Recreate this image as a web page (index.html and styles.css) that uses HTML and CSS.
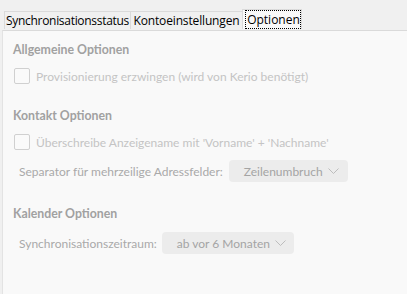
FILE: index.html
```html
<!DOCTYPE html>
<html>
<head>
<meta charset="utf-8">
<link rel="stylesheet" href="styles.css">
</head>
<body>
<div class="tabs">
  <div class="tab t1">Synchronisationsstatus</div>
  <div class="tab t2">Kontoeinstellungen</div>
  <div class="tab t3 active"><span class="focus">Optionen</span></div>
</div>
<div class="panel">
  <section class="group">
    <h2>Allgemeine Optionen</h2>
    <label class="check"><span class="box"></span>Provisionierung erzwingen (wird von Kerio benötigt)</label>
  </section>
  <section class="group">
    <h2>Kontakt Optionen</h2>
    <label class="check"><span class="box"></span>Überschreibe Anzeigename mit 'Vorname' + 'Nachname'</label>
    <div class="field">
      <span class="flabel">Separator für mehrzeilige Adressfelder:</span>
      <span class="select sep">Zeilenumbruch<svg class="chev" width="11" height="6" viewBox="0 0 11 6"><path d="M0.5 0.5 L5.5 5.5 L10.5 0.5" fill="none" stroke="#bdbdbd" stroke-width="1"/></svg></span>
    </div>
  </section>
  <section class="group">
    <h2>Kalender Optionen</h2>
    <div class="field">
      <span class="flabel">Synchronisationszeitraum:</span>
      <span class="select range">ab vor 6 Monaten<svg class="chev" width="11" height="6" viewBox="0 0 11 6"><path d="M0.5 0.5 L5.5 5.5 L10.5 0.5" fill="none" stroke="#bdbdbd" stroke-width="1"/></svg></span>
    </div>
  </section>
</div>
</body>
</html>
```
FILE: styles.css
```css
html, body {
  margin: 0;
  padding: 0;
  height: 100%;
}
body {
  background: #f0f0f0;
  font-family: "Open Sans", "Noto Sans", sans-serif;
  display: flex;
  flex-direction: column;
}
.tabs {
  display: flex;
  align-items: flex-end;
  padding: 0 0 1px 4px;
  height: 29px;
}
.tab {
  font-size: 12px;
  color: #000;
  height: 18px;
  line-height: 18px;
  border: 1px solid #dadada;
  border-bottom: none;
  margin-right: -1px;
  background: #f0f0f0;
  white-space: nowrap;
  box-sizing: border-box;
  text-align: center;
  overflow: hidden;
}
.t1 {
  width: 127px;
  letter-spacing: -0.3px;
}
.t2 {
  width: 113px;
  letter-spacing: -0.15px;
}
.t3 {
  width: 60px;
}
.tab.active {
  background: #f9f9f9;
  height: 20px;
  display: flex;
  padding: 0 0 0 2px;
}
.focus {
  flex: 1;
  display: block;
  outline: 1px dotted #000;
  outline-offset: -1px;
  line-height: 19px;
  padding-left: 1px;
}
.panel {
  flex: 1;
  margin-left: 2px;
  background: #f9f9f9;
  border-top: 1px solid #dadada;
  border-left: 1px solid #e3e3e3;
  padding: 11px 0 0 10px;
  font-family: "Lato", "Open Sans", sans-serif;
}
.group + .group {
  margin-top: 24px;
}
h2 {
  margin: 0 0 10px 0;
  font-size: 12.3px;
  font-weight: bold;
  color: #a1a1a1;
  line-height: 16px;
  height: 16px;
}
.check {
  display: flex;
  align-items: center;
  gap: 6px;
  font-size: 12px;
  color: #c4c4c4;
  padding-left: 1px;
  height: 16px;
}
.box {
  width: 14px;
  height: 14px;
  border: 1px solid #d0d0d0;
  border-radius: 2px;
  background: #fafafa;
  flex: none;
}
.field {
  display: flex;
  align-items: center;
  padding-left: 6px;
  margin-top: 10px;
}
.flabel {
  font-size: 12px;
  color: #a9a9a9;
}
.select {
  display: inline-flex;
  align-items: center;
  background: #ececec;
  border-radius: 4px;
  height: 22px;
  font-size: 12px;
  color: #a4a4a4;
  box-sizing: border-box;
  padding-left: 15px;
}
.select.sep {
  width: 119px;
  margin-left: 6px;
}
.select.range {
  width: 132px;
  margin-left: 5px;
}
.chev {
  display: block;
  margin-left: 5px;
}
```
